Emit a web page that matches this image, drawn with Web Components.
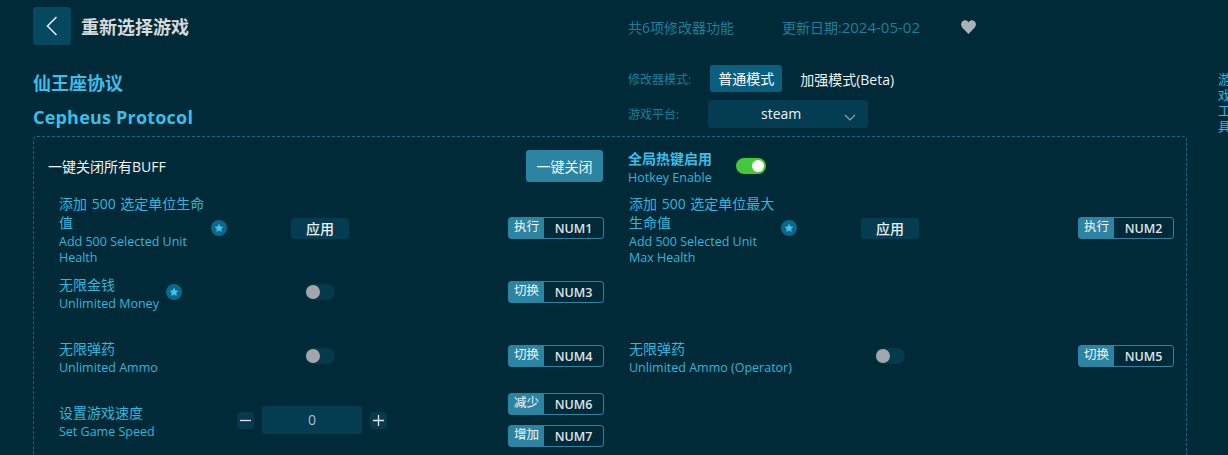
<!DOCTYPE html>
<html lang="zh">
<head>
<meta charset="utf-8">
<title>Cepheus Protocol</title>
<style>
  html, body { margin: 0; height: 100%; background: #012a38; overflow: hidden; }
  body { font-family: "Open Sans", "Noto Sans CJK SC", sans-serif; }
</style>
</head>
<body>
<trainer-app>
  <top-bar slot="top"></top-bar>
  <action-panel slot="panel">
    <close-row slot="head"></close-row>
    <cheat-row zh="添加 500 选定单位生命值" en="Add 500 Selected Unit Health" star>
      <apply-button slot="control"></apply-button>
      <hot-key slot="keys" action="执行" key="NUM1"></hot-key>
    </cheat-row>
    <cheat-row zh="添加 500 选定单位最大生命值" en="Add 500 Selected Unit Max Health" star>
      <apply-button slot="control"></apply-button>
      <hot-key slot="keys" action="执行" key="NUM2"></hot-key>
    </cheat-row>
    <cheat-row zh="无限金钱" en="Unlimited Money" star>
      <toggle-switch slot="control"></toggle-switch>
      <hot-key slot="keys" action="切换" key="NUM3"></hot-key>
    </cheat-row>
    <div></div>
    <cheat-row zh="无限弹药" en="Unlimited Ammo">
      <toggle-switch slot="control"></toggle-switch>
      <hot-key slot="keys" action="切换" key="NUM4"></hot-key>
    </cheat-row>
    <cheat-row zh="无限弹药" en="Unlimited Ammo (Operator)">
      <toggle-switch slot="control"></toggle-switch>
      <hot-key slot="keys" action="切换" key="NUM5"></hot-key>
    </cheat-row>
    <cheat-row zh="设置游戏速度" en="Set Game Speed">
      <speed-stepper slot="control"></speed-stepper>
      <hot-key slot="keys" action="减少" key="NUM6"></hot-key>
      <hot-key slot="keys" action="增加" key="NUM7"></hot-key>
    </cheat-row>
  </action-panel>
</trainer-app>

<script>
class TrainerApp extends HTMLElement {
  constructor() {
    super();
    this.attachShadow({ mode: "open" });
    this.shadowRoot.innerHTML = `
      <style>
        :host { display: flex; height: 455px; overflow: hidden; padding-left: 33px; }
        .main { width: 1154px; flex: none; }
        aside {
          width: 13px;
          margin-left: 31px;
          padding-top: 72px;
          font-size: 13px;
          line-height: 15.5px;
          color: #33b5dd;
        }
      </style>
      <div class="main">
        <slot name="top"></slot>
        <slot name="panel"></slot>
      </div>
      <aside>游戏工具</aside>
    `;
  }
}

class TopBar extends HTMLElement {
  constructor() {
    super();
    this.attachShadow({ mode: "open" });
    this.shadowRoot.innerHTML = `
      <style>
        :host { display: grid; grid-template-columns: 595px 1fr; height: 136px; }
        .back-line { display: flex; align-items: center; gap: 10px; margin-top: 7px; }
        .back {
          width: 38px; height: 38px; border-radius: 3px; background: #04495f;
          display: flex; align-items: center; justify-content: center;
        }
        .back-title { font-size: 18px; font-weight: 700; color: #d5dadc; }
        h1 { margin: 0; font-size: 18px; line-height: 24px; font-weight: 700; color: #3bbfe8; }
        .zh { margin-top: 26px; }
        .en { margin-top: 10px; letter-spacing: .2px; }
        .meta {
          display: flex; align-items: center; height: 20px; margin-top: 17px;
          font-size: 14px; color: #1f7f9b;
        }
        .date { margin-left: 48px; }
        .date i { font-style: normal; font-size: 15px; }
        .meta svg { margin-left: 41px; }
        .line { display: flex; align-items: center; font-size: 12px; color: #1f7f9b; }
        .mode { margin-top: 28px; height: 27px; }
        .mode b {
          width: 72px; height: 27px; line-height: 27px; margin-left: 19px; border-radius: 3px;
          background: #0a5f7e; color: #fff; font-weight: 400; font-size: 14px; text-align: center;
        }
        .mode span { margin-left: 18px; color: #f0f3f4; font-size: 14px; }
        .platform { margin-top: 8px; }
        .select {
          position: relative; box-sizing: border-box; width: 160px; height: 28px; line-height: 28px;
          margin-left: 29px; padding-right: 14px; border-radius: 3px; background: #043d52;
          color: #eef1f2; font-size: 14px; font-weight: 500; text-align: center;
        }
        .select svg { position: absolute; right: 12px; top: 14px; }
      </style>
      <div>
        <div class="back-line">
          <div class="back">
            <svg width="12" height="20" viewBox="0 0 12 20" fill="none" stroke="#e4e8ea" stroke-width="1.6">
              <path d="M10.5 1 1.5 10l9 9"/>
            </svg>
          </div>
          <span class="back-title">重新选择游戏</span>
        </div>
        <h1 class="zh">仙王座协议</h1>
        <h1 class="en">Cepheus Protocol</h1>
      </div>
      <div>
        <div class="meta">
          <span>共6项修改器功能</span>
          <span class="date">更新日期:<i>2024-05-02</i></span>
          <svg width="15" height="14" viewBox="0 0 24 22" fill="#a9b2b7">
            <path d="M12 22 2.6 12.4C-.6 9-.6 4.6 2 2.2 4.8-.6 9.4-.2 12 3.4c2.6-3.6 7.200-4 10-1.200 2.600 2.400 2.600 6.800-.6 10.200z"/>
          </svg>
        </div>
        <div class="line mode">修改器模式:<b>普通模式</b><span>加强模式(Beta)</span></div>
        <div class="line platform">游戏平台:
          <div class="select">steam
            <svg width="12" height="7" viewBox="0 0 12 7" fill="none" stroke="#8fa3ad" stroke-width="1.200">
              <path d="M1 1l5 5 5-5"/>
            </svg>
          </div>
        </div>
      </div>
    `;
  }
}

class ActionPanel extends HTMLElement {
  constructor() {
    super();
    this.attachShadow({ mode: "open" });
    this.shadowRoot.innerHTML = `
      <style>
        :host {
          display: block; height: 400px; box-sizing: border-box;
          border: 1px dashed #17688a; border-radius: 4px; padding-top: 13px;
        }
        .rows { display: grid; grid-template-columns: 570px 570px; grid-auto-rows: 64px; }
      </style>
      <slot name="head"></slot>
      <div class="rows"><slot></slot></div>
    `;
  }
}

class CloseRow extends HTMLElement {
  constructor() {
    super();
    this.attachShadow({ mode: "open" });
    this.shadowRoot.innerHTML = `
      <style>
        :host {
          display: grid; grid-template-columns: 570px 1fr; grid-template-rows: 32px; margin-bottom: 14px;
        }
        .left { display: flex; align-items: center; justify-content: space-between; padding-left: 14px; }
        .left span { font-size: 14px; color: #f2f4f5; }
        button {
          all: unset; width: 77px; height: 32px; border-radius: 3px; background: #2a84a2;
          color: #f2f5f6; font-size: 14px; text-align: center; margin-right: 1px;
        }
        .right { display: flex; align-items: center; padding-left: 24px; }
        .zh { font-size: 14px; line-height: 19px; font-weight: 700; color: #3bbfe8; }
        .en { font-size: 12.5px; line-height: 16px; margin-top: 2px; color: #33b5dd; }
        .labels { padding-top: 2px; }
        toggle-switch { margin-left: 24px; }
      </style>
      <div class="left"><span>一键关闭所有BUFF</span><button>一键关闭</button></div>
      <div class="right">
        <div class="labels">
          <div class="zh">全局热键启用</div>
          <div class="en">Hotkey Enable</div>
        </div>
        <toggle-switch on></toggle-switch>
      </div>
    `;
  }
}

class CheatRow extends HTMLElement {
  constructor() {
    super();
    this.attachShadow({ mode: "open" });
    const hasStar = this.hasAttribute("star");
    const star = hasStar ? `
      <svg class="star" width="16" height="16" viewBox="0 0 16 16">
        <circle cx="8" cy="8" r="8" fill="#0c6788"/>
        <path fill="#3cc3f0" d="M8 3.500l1.400 2.900 3.100.4-2.300 2.200.6 3.100L8 10.600l-2.800 1.500.6-3.100-2.300-2.200 3.100-.4z"/>
      </svg>` : "";
    this.shadowRoot.innerHTML = `
      <style>
        :host {
          display: grid; grid-template-columns: 171px 180px 1fr; grid-template-rows: 64px; align-items: center;
          padding-left: 25px; height: 64px;
        }
        .label { display: flex; align-items: center; }
        .text { padding-top: 3px; ${hasStar ? "max-width: 145px;" : ""} }
        .zh { font-size: 14px; line-height: 19px; color: #33b5dd; word-spacing: 1px; margin-right: -4px; }
        .en { font-size: 12.5px; line-height: 16px; margin-top: 2px; color: #33b5dd; }
        .star { flex: none; margin-left: 7px; }
        .control { display: flex; justify-content: center; }
        .keys { display: flex; flex-direction: column; align-items: flex-end; gap: 10px; }
      </style>
      <div class="label">
        <div class="text">
          <div class="zh">${this.getAttribute("zh")}</div>
          <div class="en">${this.getAttribute("en")}</div>
        </div>
        ${star}
      </div>
      <div class="control"><slot name="control"></slot></div>
      <div class="keys"><slot name="keys"></slot></div>
    `;
  }
}

class ApplyButton extends HTMLElement {
  constructor() {
    super();
    this.attachShadow({ mode: "open" });
    this.shadowRoot.innerHTML = `
      <style>
        :host {
          display: block; width: 58px; height: 21px; line-height: 21px; border-radius: 3px;
          background: #043d52; color: #eef1f2; font-size: 14px; font-weight: 500; text-align: center;
        }
      </style>
      应用
    `;
  }
}

class ToggleSwitch extends HTMLElement {
  constructor() {
    super();
    this.attachShadow({ mode: "open" });
    const on = this.hasAttribute("on");
    this.shadowRoot.innerHTML = `
      <style>
        :host {
          display: flex; align-items: center; box-sizing: border-box;
          width: 30px; height: 16px; padding: 0 1px; border-radius: 8px;
          background: ${on ? "#43c838" : "#033a4c"};
          justify-content: ${on ? "flex-end" : "flex-start"};
        }
        i { width: ${on ? 12 : 14}px; height: ${on ? 12 : 14}px; margin: 0 ${on ? 1 : 0}px;
            border-radius: 50%; background: ${on ? "#fff" : "#a3a7ab"}; }
      </style>
      <i></i>
    `;
  }
}

class HotKey extends HTMLElement {
  constructor() {
    super();
    this.attachShadow({ mode: "open" });
    this.shadowRoot.innerHTML = `
      <style>
        :host {
          display: flex; box-sizing: border-box; width: 96px; height: 22px;
          border: 1px solid #2a84a2; border-radius: 3px;
        }
        .act {
          width: 35px; background: #2a84a2; color: #f2f5f6;
          font-size: 12.5px; line-height: 18px; text-align: center;
        }
        .key {
          flex: 1; color: #dfe4e7; font-size: 12.5px; line-height: 21px; text-align: center; font-weight: 600;
        }
      </style>
      <div class="act">${this.getAttribute("action")}</div>
      <div class="key">${this.getAttribute("key")}</div>
    `;
  }
}

class SpeedStepper extends HTMLElement {
  constructor() {
    super();
    this.attachShadow({ mode: "open" });
    this.shadowRoot.innerHTML = `
      <style>
        :host { display: flex; align-items: center; gap: 8px; margin-right: 16px; }
        .step {
          width: 17px; height: 17px; border-radius: 3px; background: #063a4c;
          display: flex; align-items: center; justify-content: center;
        }
        .value {
          width: 100px; height: 28px; line-height: 28px; border-radius: 3px; background: #043d52;
          color: #b4bec4; font-size: 14px; text-align: center;
        }
      </style>
      <div class="step">
        <svg width="11" height="11" viewBox="0 0 11 11" stroke="#dfe4e7" stroke-width="1.300"><path d="M0 5.500h11"/></svg>
      </div>
      <div class="value">0</div>
      <div class="step">
        <svg width="11" height="11" viewBox="0 0 11 11" stroke="#dfe4e7" stroke-width="1.300"><path d="M0 5.500h11M5.500 0v11"/></svg>
      </div>
    `;
  }
}

customElements.define("trainer-app", TrainerApp);
customElements.define("top-bar", TopBar);
customElements.define("action-panel", ActionPanel);
customElements.define("close-row", CloseRow);
customElements.define("cheat-row", CheatRow);
customElements.define("apply-button", ApplyButton);
customElements.define("toggle-switch", ToggleSwitch);
customElements.define("hot-key", HotKey);
customElements.define("speed-stepper", SpeedStepper);
</script>
</body>
</html>
